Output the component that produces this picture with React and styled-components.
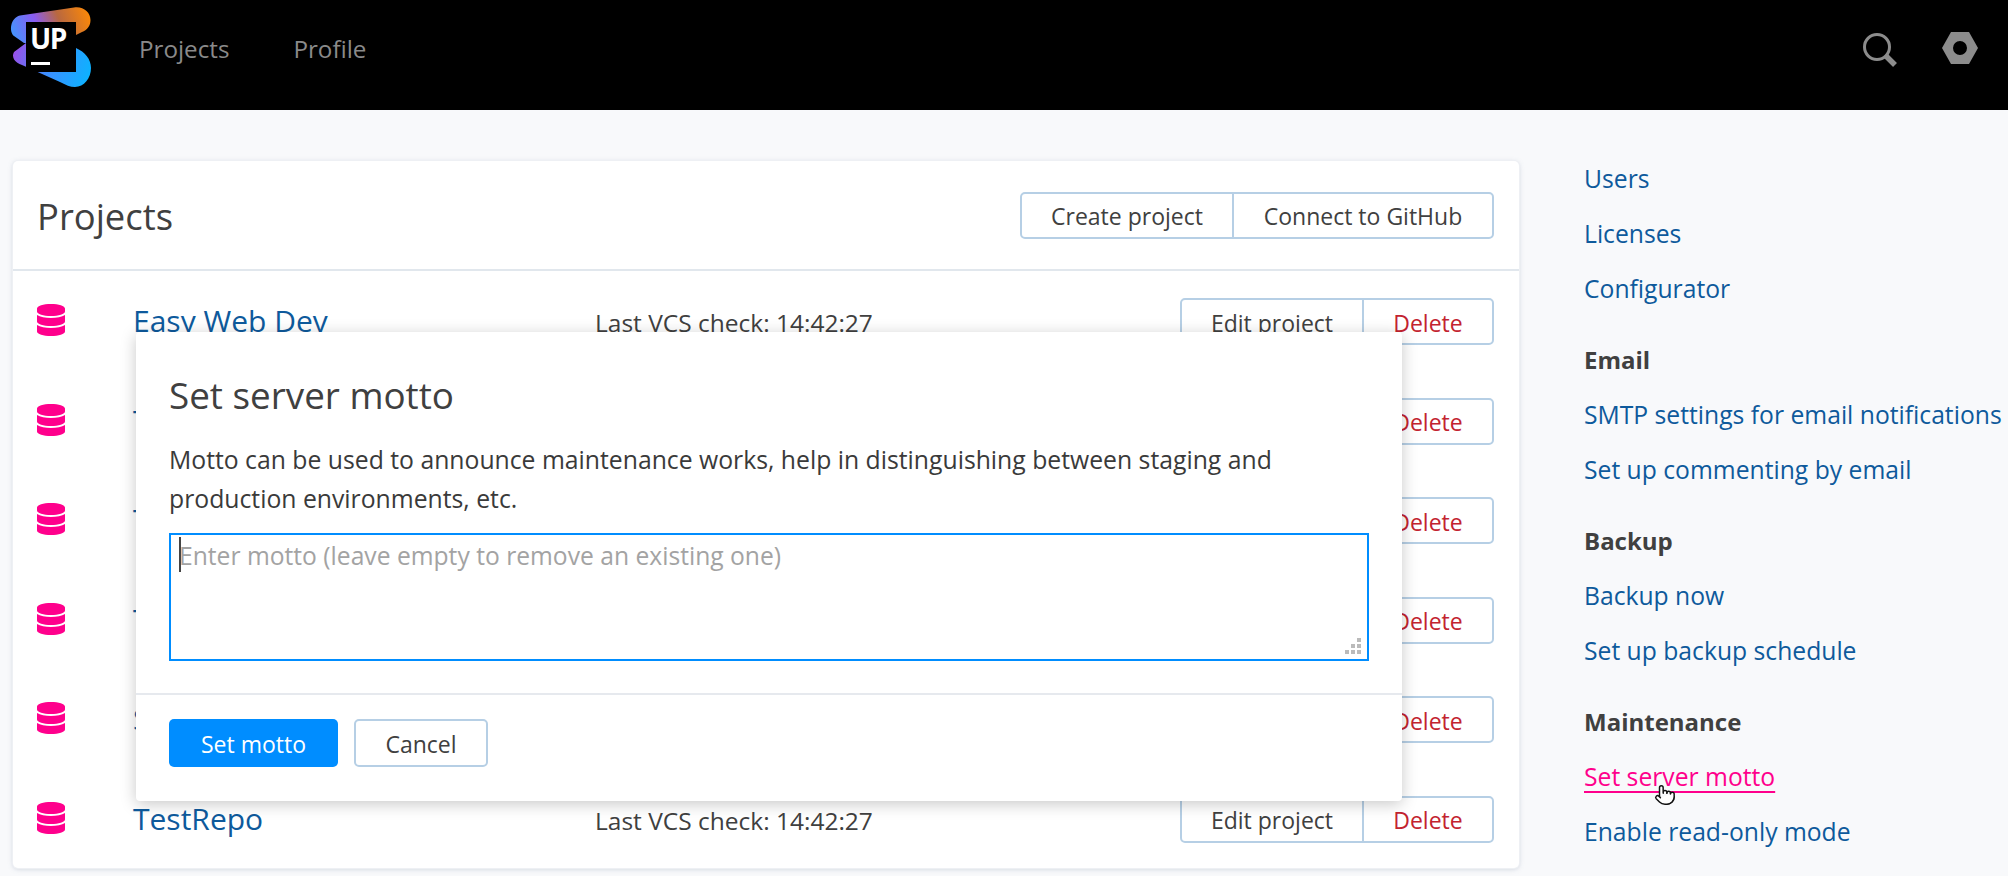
import React from "react";
import styled, { createGlobalStyle } from "styled-components";
import { FaDatabase } from "react-icons/fa";
import { Pointer } from "lucide-react";

const Global = createGlobalStyle`
  html, body {
    margin: 0;
    padding: 0;
    height: 876px;
    overflow: hidden;
    background: #f8f9fb;
    font-family: "Open Sans", "Noto Sans", sans-serif;
    color: #3f3f3f;
  }
  * { box-sizing: border-box; }
`;

const Page = styled.div`
  position: relative;
  width: 2008px;
  height: 876px;
  overflow: hidden;
`;

const TopBar = styled.header`
  height: 110px;
  background: #000;
  display: flex;
  align-items: center;
`;
const LogoBox = styled.div`
  width: 139px;
  height: 110px;
  flex: none;
`;
const NavLink = styled.a`
  font-size: 24.2px;
  color: #8a8a8a;
  margin-right: 64px;
  margin-top: -13px;
`;
const TopIcons = styled.div`
  margin-left: auto;
  margin-top: -10px;
  display: flex;
  align-items: flex-start;
  gap: 44px;
  padding-right: 30px;
`;

const Main = styled.main`
  display: flex;
  align-items: flex-start;
  padding: 51px 0 0 13px;
`;
const Card = styled.section`
  width: 1506px;
  height: 707px;
  flex: none;
  background: #fff;
  border-radius: 5px;
  box-shadow: 0 0 0 1px #eef0f4, 0 1px 5px rgba(120, 135, 160, 0.35);
`;
const CardHead = styled.div`
  height: 110px;
  padding: 0 25px 0 24px;
  display: flex;
  align-items: center;
  justify-content: space-between;
  border-bottom: 2px solid #e1e7ed;
`;
const CardTitle = styled.h1`
  margin: 2px 0 0;
  font-size: 36.4px;
  font-weight: 400;
  color: #404040;
`;
const ButtonGroup = styled.div`
  display: flex;
  height: 47px;
  border: 2px solid #b6cfe5;
  border-radius: 5px;
  background: #fff;
`;
const GroupButton = styled.button`
  padding: 2px 0 0;
  width: ${(p) => p.$width}px;
  border: 0;
  border-left: ${(p) => (p.$first ? "0" : "2px solid #b6cfe5")};
  background: transparent;
  font-family: inherit;
  font-size: 23px;
  color: ${(p) => (p.$danger ? "#c3232f" : "#404040")};
`;
const Row = styled.div`
  height: 99.6px;
  padding: 27px 25px 0 24px;
  display: flex;
  align-items: flex-start;
`;
const RowIcon = styled.div`
  width: 98px;
  margin-left: -2px;
  flex: none;
  color: #ff008c;
  padding-top: 6px;
  display: flex;
`;
const RowName = styled.a`
  width: 462px;
  flex: none;
  font-size: 30px;
  line-height: 46px;
  color: #0e5a9c;
`;
const RowCheck = styled.div`
  font-size: 24.5px;
  line-height: 50px;
  color: #404040;
`;
const RowActions = styled.div`
  margin-left: auto;
`;

const Side = styled.aside`
  margin-left: 65px;
  margin-top: -10px;
  display: flex;
  flex-direction: column;
  gap: 16px;
`;
const SideGroup = styled.div`
  display: flex;
  flex-direction: column;
`;
const SideItem = styled.a`
  height: 55px;
  line-height: 55px;
  font-size: ${(p) => (p.$head ? 24 : 24.7)}px;
  white-space: nowrap;
  color: ${(p) => (p.$active ? "#ff008c" : "#0e5a9c")};
  font-weight: ${(p) => (p.$head ? 700 : 400)};
  ${(p) => p.$head && "color: #404040;"}
  ${(p) => p.$active && "text-decoration: underline; text-underline-offset: 5px; text-decoration-thickness: 2px;"}
`;
const HandCursor = styled.div`
  position: absolute;
  left: 1654px;
  top: 784px;
  line-height: 0;
  color: #111;
`;

const Modal = styled.div`
  position: absolute;
  left: 136px;
  top: 332px;
  width: 1266px;
  height: 469px;
  background: #fff;
  border-radius: 4px;
  box-shadow: 0 3px 16px rgba(0, 0, 0, 0.22);
  display: flex;
  flex-direction: column;
`;
const ModalBody = styled.div`
  height: 363px;
  padding: 39px 33px 0;
  border-bottom: 2px solid #e6e9ee;
`;
const ModalTitle = styled.h2`
  margin: 0 0 21px;
  font-size: 36.8px;
  line-height: 48px;
  font-weight: 400;
  color: #404040;
`;
const ModalText = styled.p`
  margin: 0 0 15px;
  font-size: 24.75px;
  line-height: 39px;
  color: #3a3a3a;
`;
const MottoWrap = styled.div`
  position: relative;
  height: 128px;
`;
const MottoInput = styled.textarea`
  display: block;
  width: 100%;
  height: 100%;
  padding: 1px 8px;
  border: 2px solid #008dff;
  outline: 0;
  border-radius: 0;
  resize: none;
  font-family: inherit;
  font-size: 24.65px;
  line-height: 40px;
  &::placeholder { color: #a3a3a3; opacity: 1; }
`;
const Caret = styled.span`
  position: absolute;
  left: 10px;
  top: 4px;
  width: 2px;
  height: 35px;
  background: #444;
`;
const Grip = styled.svg`
  position: absolute;
  right: 8px;
  bottom: 7px;
`;
const ModalFoot = styled.div`
  padding: 24px 33px 0;
  display: flex;
  gap: 16px;
`;
const PrimaryButton = styled.button`
  width: 169px;
  height: 48px;
  padding: 2px 0 0;
  border: 0;
  border-radius: 5px;
  background: #008dff;
  color: #fff;
  font-family: inherit;
  font-size: 23px;
`;
const CancelButton = styled.button`
  width: 134px;
  height: 48px;
  padding: 2px 0 0;
  border: 2px solid #b6cfe5;
  border-radius: 5px;
  background: #fff;
  color: #404040;
  font-family: inherit;
  font-size: 23px;
`;

const Logo = () => (
  <svg width="100" height="96" viewBox="0 0 100 96">
    <defs>
      <linearGradient id="upTop" x1="11" y1="40" x2="90" y2="10" gradientUnits="userSpaceOnUse">
        <stop offset="0" stopColor="#3d9bff" />
        <stop offset="0.35" stopColor="#8a5cf0" />
        <stop offset="0.62" stopColor="#b9683f" />
        <stop offset="1" stopColor="#ff8a05" />
      </linearGradient>
      <linearGradient id="upBottom" x1="14" y1="50" x2="90" y2="75" gradientUnits="userSpaceOnUse">
        <stop offset="0" stopColor="#9a50e8" />
        <stop offset="0.45" stopColor="#3f8cff" />
        <stop offset="1" stopColor="#0db2ff" />
      </linearGradient>
    </defs>
    <path d="M20 15.5 L74 7.5 C83 6 90.5 12 90.5 20 C90.5 26 87 30 82 32 L60 43 L24 43 L14 36 C9 32 10 18 20 15.5Z" fill="url(#upTop)" />
    <path d="M26 43 L14 52 C11 57 15 63 22 65 L60 82 C66 85 70 87 75 87 C84 87 91 78 91 68 C91 59 85 52 76 48 L60 40Z" fill="url(#upBottom)" />
    <rect x="26" y="22" width="50" height="50" fill="#000" />
    <text x="30" y="49" fontFamily="'Open Sans', sans-serif" fontWeight="700" fontSize="28" letterSpacing="-1.5" fill="#fff">UP</text>
    <rect x="31" y="62" width="19" height="3" fill="#fff" />
  </svg>
);

const SearchIcon = () => (
  <svg width="36" height="36" viewBox="0 0 36 36" fill="none" stroke="#8c8c8c">
    <circle cx="15" cy="15" r="12.5" strokeWidth="3" />
    <path d="M24 24 L33 33" strokeWidth="5.5" />
  </svg>
);

const NutIcon = () => (
  <svg width="36" height="32" viewBox="0 0 36 32">
    <path
      fillRule="evenodd"
      fill="#8c8c8c"
      d="M9 0 H27 L36 16 L27 32 H9 L0 16Z M18 9 A7 7 0 1 0 18 23 A7 7 0 1 0 18 9Z"
    />
  </svg>
);

const rows = ["Easy Web Dev", "TeamCity", "Tools", "TestData", "Sandbox", "TestRepo"];

const sideGroups = [
  { items: ["Users", "Licenses", "Configurator"] },
  { head: "Email", items: ["SMTP settings for email notifications", "Set up commenting by email"] },
  { head: "Backup", items: ["Backup now", "Set up backup schedule"] },
  { head: "Maintenance", items: ["Set server motto", "Enable read-only mode"] },
];

export default function App() {
  return (
    <Page>
      <Global />
      <TopBar>
        <LogoBox>
          <Logo />
        </LogoBox>
        <NavLink>Projects</NavLink>
        <NavLink>Profile</NavLink>
        <TopIcons>
          <SearchIcon />
          <NutIcon />
        </TopIcons>
      </TopBar>
      <Main>
        <Card>
          <CardHead>
            <CardTitle>Projects</CardTitle>
            <ButtonGroup>
              <GroupButton $first $width={210}>Create project</GroupButton>
              <GroupButton $width={260}>Connect to GitHub</GroupButton>
            </ButtonGroup>
          </CardHead>
          {rows.map((name) => (
            <Row key={name}>
              <RowIcon>
                <FaDatabase size={32} />
              </RowIcon>
              <RowName>{name}</RowName>
              <RowCheck>Last VCS check: 14:42:27</RowCheck>
              <RowActions>
                <ButtonGroup>
                  <GroupButton $first $width={180}>Edit project</GroupButton>
                  <GroupButton $danger $width={130}>Delete</GroupButton>
                </ButtonGroup>
              </RowActions>
            </Row>
          ))}
        </Card>
        <Side>
          {sideGroups.map((group, i) => (
            <SideGroup key={i}>
              {group.head && <SideItem $head>{group.head}</SideItem>}
              {group.items.map((item) => (
                <SideItem key={item} $active={item === "Set server motto"}>
                  {item}
                </SideItem>
              ))}
            </SideGroup>
          ))}
        </Side>
      </Main>
      <HandCursor>
        <Pointer size={22} fill="#fff" strokeWidth={1.6} />
      </HandCursor>
      <Modal>
        <ModalBody>
          <ModalTitle>Set server motto</ModalTitle>
          <ModalText>
            Motto can be used to announce maintenance works, help in distinguishing between staging and
            production environments, etc.
          </ModalText>
          <MottoWrap>
            <MottoInput placeholder="Enter motto (leave empty to remove an existing one)" />
            <Caret />
            <Grip width="16" height="16" viewBox="0 0 16 16" fill="#bbb">
              <rect x="0" y="12" width="4" height="4" />
              <rect x="6" y="12" width="4" height="4" />
              <rect x="12" y="12" width="4" height="4" />
              <rect x="6" y="6" width="4" height="4" />
              <rect x="12" y="6" width="4" height="4" />
              <rect x="12" y="0" width="4" height="4" />
            </Grip>
          </MottoWrap>
        </ModalBody>
        <ModalFoot>
          <PrimaryButton>Set motto</PrimaryButton>
          <CancelButton>Cancel</CancelButton>
        </ModalFoot>
      </Modal>
    </Page>
  );
}
